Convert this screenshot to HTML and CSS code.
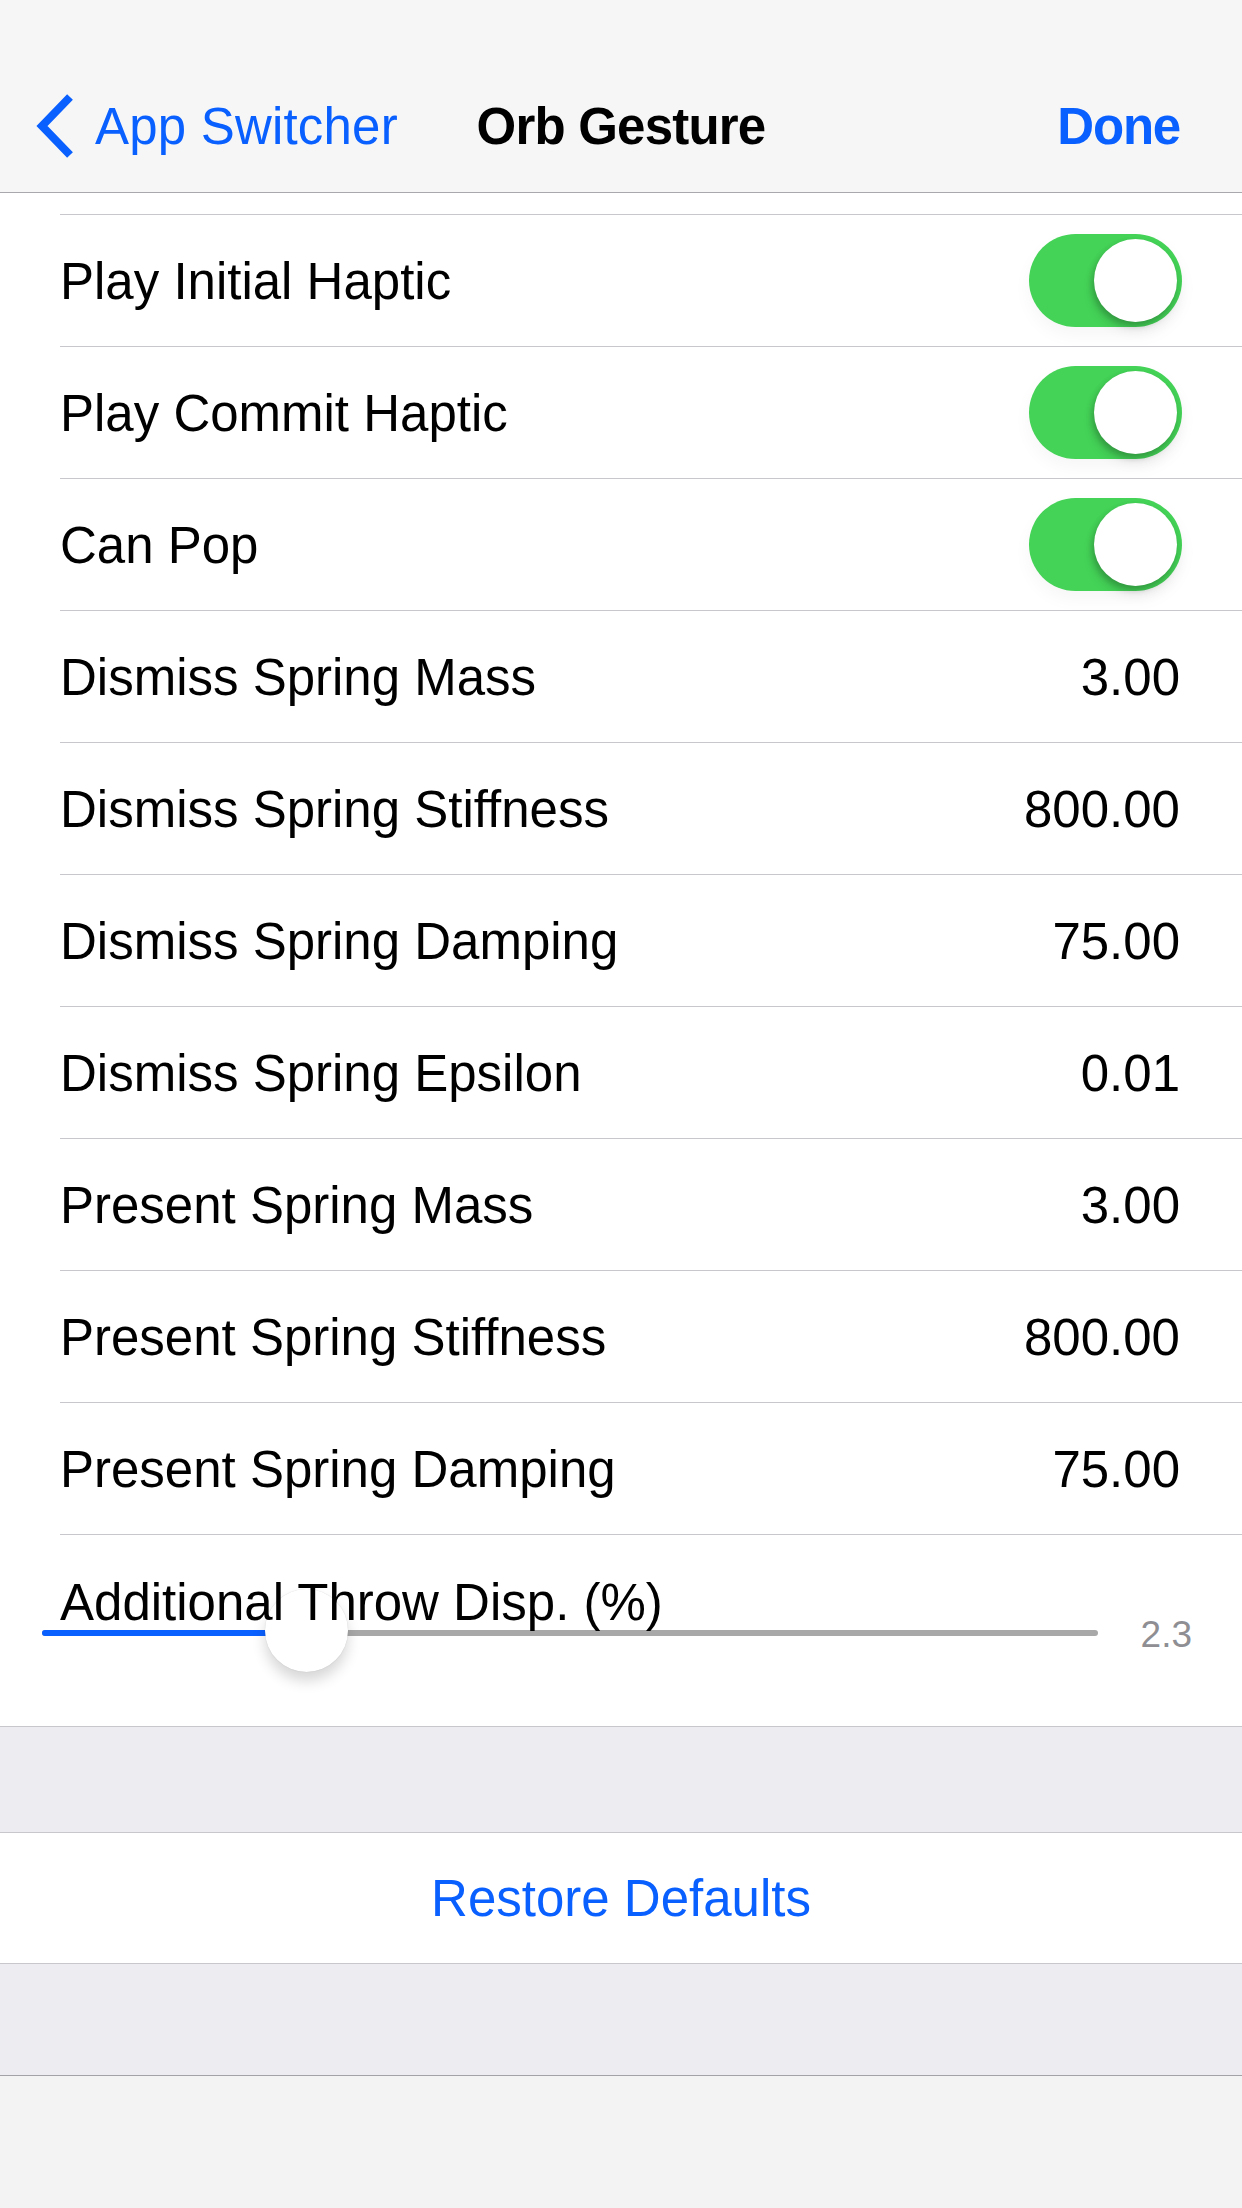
FILE: index.html
```html
<!DOCTYPE html>
<html>
<head>
<meta charset="utf-8">
<link rel="stylesheet" href="styles.css">
</head>
<body>
<div class="screen">
  <header class="navbar">
    <div class="nav-left">
      <svg class="chevron" width="40" height="66" viewBox="0 0 40 66">
        <polyline points="35,4 7,33 35,62" fill="none" stroke="#0a60ff" stroke-width="8" stroke-linejoin="miter" stroke-linecap="butt"/>
      </svg>
      <span class="nav-back">App Switcher</span>
    </div>
    <div class="nav-title">Orb Gesture</div>
    <div class="nav-right">Done</div>
  </header>

  <section class="list">
    <div class="row"><span class="label">Play Initial Haptic</span><span class="toggle"><span class="knob"></span></span></div>
    <div class="row"><span class="label">Play Commit Haptic</span><span class="toggle"><span class="knob"></span></span></div>
    <div class="row"><span class="label">Can Pop</span><span class="toggle"><span class="knob"></span></span></div>
    <div class="row"><span class="label">Dismiss Spring Mass</span><span class="value">3.00</span></div>
    <div class="row"><span class="label">Dismiss Spring Stiffness</span><span class="value">800.00</span></div>
    <div class="row"><span class="label">Dismiss Spring Damping</span><span class="value">75.00</span></div>
    <div class="row"><span class="label">Dismiss Spring Epsilon</span><span class="value">0.01</span></div>
    <div class="row"><span class="label">Present Spring Mass</span><span class="value">3.00</span></div>
    <div class="row"><span class="label">Present Spring Stiffness</span><span class="value">800.00</span></div>
    <div class="row"><span class="label">Present Spring Damping</span><span class="value">75.00</span></div>
    <div class="slider-row">
      <span class="slider-label">Additional Throw Disp. (%)</span>
      <div class="slider-line">
        <div class="track">
          <div class="track-fill" style="width: 264px"></div>
          <div class="slider-knob" style="left: 223px"></div>
        </div>
        <span class="slider-value">2.3</span>
      </div>
    </div>
  </section>

  <section class="action-group">
    <div class="action">Restore Defaults</div>
  </section>

  <footer class="toolbar"></footer>
</div>
</body>
</html>
```

FILE: styles.css
```css
* { box-sizing: border-box; }

html, body {
  margin: 0;
  padding: 0;
}

body {
  width: 1242px;
  height: 2208px;
  overflow: hidden;
  background: #ececf1;
  font-family: "Liberation Sans", Arial, sans-serif;
  color: #000;
}

.screen {
  display: flex;
  flex-direction: column;
  height: 2208px;
}

/* Navigation bar */
.navbar {
  height: 193px;
  padding-top: 60px;
  background: #f6f6f7;
  border-bottom: 1px solid #a9a9ad;
  display: grid;
  grid-template-columns: 1fr auto 1fr;
  align-items: center;
  font-size: 51px;
}

.nav-left {
  display: flex;
  align-items: center;
  padding-left: 35px;
  color: #0a60ff;
}

.chevron {
  display: block;
  margin-top: 0;
  margin-right: 20px;
}

.nav-back {
  letter-spacing: 0.2px;
}

.nav-title {
  font-weight: bold;
  letter-spacing: -0.8px;
}

.nav-right {
  justify-self: end;
  padding-right: 62px;
  color: #0a60ff;
  font-weight: bold;
  letter-spacing: -1.2px;
}

/* Settings list */
.list {
  background: #fff;
  padding-top: 21px;
  border-bottom: 1px solid #c8c7cc;
}

.row {
  margin-left: 60px;
  padding-right: 60px;
  height: 132px;
  border-top: 1px solid #c8c7cc;
  display: flex;
  align-items: center;
  justify-content: space-between;
  font-size: 51px;
}

.label {
  padding-top: 2px;
}

.value {
  margin-right: 2px;
  padding-top: 2px;
}

.toggle {
  width: 153px;
  height: 93px;
  border-radius: 47px;
  background: #44d257;
  display: flex;
  align-items: center;
  justify-content: flex-end;
  padding-right: 5px;
  box-shadow: 0 8px 18px rgba(0, 0, 0, 0.04);
}

.knob {
  width: 83px;
  height: 83px;
  border-radius: 50%;
  background: #fff;
  box-shadow: -2px 4px 6px rgba(0, 0, 0, 0.22), 0 8px 14px rgba(0, 0, 0, 0.08);
}

/* Slider row */
.slider-row {
  margin-left: 60px;
  padding-right: 50px;
  height: 192px;
  border-top: 1px solid #c8c7cc;
  padding-top: 37px;
  display: flex;
  flex-direction: column;
}

.slider-label {
  position: relative;
  z-index: 2;
  font-size: 51px;
  line-height: 61px;
  height: 61px;
}

.slider-line {
  display: flex;
  align-items: center;
  margin-left: -18px;
  height: 6px;
  margin-top: -3px;
}

.track {
  position: relative;
  width: 1056px;
  height: 6px;
  border-radius: 3px;
  background: #a8a8a8;
}

.track-fill {
  height: 6px;
  border-radius: 3px;
  background: #0a60ff;
}

.slider-knob {
  position: absolute;
  top: -41px;
  width: 83px;
  height: 83px;
  border-radius: 50%;
  background: #fff;
  z-index: 1;
  box-shadow: 0 9px 14px rgba(0, 0, 0, 0.16), 0 0 1px rgba(0, 0, 0, 0.18);
}

.slider-value {
  margin-left: auto;
  font-size: 37px;
  color: #8e8e93;
  padding-top: 3px;
}

/* Restore defaults */
.action-group {
  margin-top: 105px;
  background: #fff;
  border-top: 1px solid #c8c7cc;
  border-bottom: 1px solid #c8c7cc;
  height: 132px;
}

.action {
  height: 130px;
  display: flex;
  align-items: center;
  justify-content: center;
  font-size: 51px;
  color: #0a60ff;
}

/* Bottom toolbar */
.toolbar {
  margin-top: auto;
  height: 133px;
  background: #f3f3f4;
  border-top: 1px solid #a3a3a7;
}
```
